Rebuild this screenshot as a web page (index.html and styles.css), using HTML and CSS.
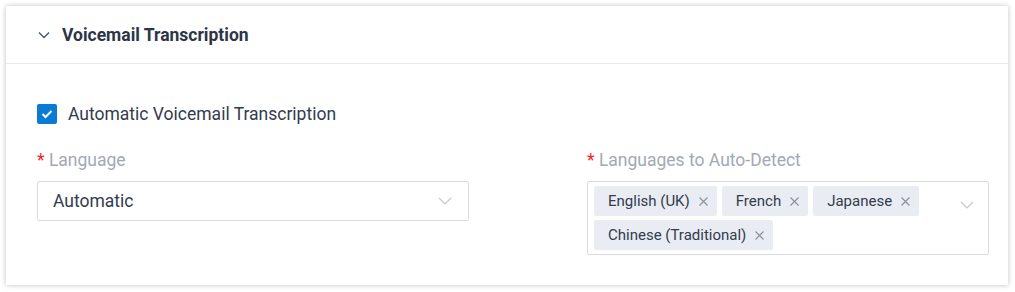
FILE: index.html
```html
<!DOCTYPE html>
<html lang="en">
  <head>
    <meta charset="UTF-8" />
    <meta name="viewport" content="width=device-width, initial-scale=1.0" />
    <title>Voicemail Transcription</title>
    <link rel="stylesheet" href="styles.css">
  </head>
  <body>
    <div class="card">
      <div class="card-header">
        <svg class="collapse-icon" width="12" height="8" viewBox="0 0 12 8">
          <path d="M1 1.5 L6 6.5 L11 1.5" fill="none" stroke="#4a5263" stroke-width="1.3" />
        </svg>
        <h2>Voicemail Transcription</h2>
      </div>
      <div class="card-body">
        <label class="check">
          <span class="checkbox">
            <svg width="12" height="10" viewBox="0 0 12 10">
              <path d="M1.5 5 L4.5 8 L10.5 2" fill="none" stroke="#fff" stroke-width="2" />
            </svg>
          </span>
          Automatic Voicemail Transcription
        </label>

        <div class="fields">
          <div class="field field-left">
            <div class="field-label"><span class="req">*</span> Language</div>
            <div class="select">
              <span class="select-value">Automatic</span>
              <svg class="arrow" width="14" height="8" viewBox="0 0 14 8">
                <path d="M1 1 L7 7 L13 1" fill="none" stroke="#c4c8d0" stroke-width="1.2" />
              </svg>
            </div>
          </div>

          <div class="field field-right">
            <div class="field-label"><span class="req">*</span> Languages to Auto-Detect</div>
            <div class="select multi">
              <div class="tags">
                <span class="tag">English (UK)<svg class="x" width="9" height="9" viewBox="0 0 9 9"><path d="M0.5 0.5 L8.5 8.5 M8.5 0.5 L0.5 8.5" stroke="#8a909c" stroke-width="1.1" /></svg></span>
                <span class="tag">French<svg class="x" width="9" height="9" viewBox="0 0 9 9"><path d="M0.5 0.5 L8.5 8.5 M8.5 0.5 L0.5 8.5" stroke="#8a909c" stroke-width="1.1" /></svg></span>
                <span class="tag">Japanese<svg class="x" width="9" height="9" viewBox="0 0 9 9"><path d="M0.5 0.5 L8.5 8.5 M8.5 0.5 L0.5 8.5" stroke="#8a909c" stroke-width="1.1" /></svg></span>
                <span class="tag">Chinese (Traditional)<svg class="x" width="9" height="9" viewBox="0 0 9 9"><path d="M0.5 0.5 L8.5 8.5 M8.5 0.5 L0.5 8.5" stroke="#8a909c" stroke-width="1.1" /></svg></span>
              </div>
              <svg class="arrow" width="14" height="8" viewBox="0 0 14 8">
                <path d="M1 1 L7 7 L13 1" fill="none" stroke="#c4c8d0" stroke-width="1.2" />
              </svg>
            </div>
          </div>
        </div>
      </div>
    </div>
  </body>
</html>
```

FILE: styles.css
```css
body {
  margin: 0;
  padding: 6px 7px 7px 6px;
  background-color: #fff;
  font-family: Roboto, "Noto Sans", sans-serif;
  color: #333b4d;
}

.card {
  background-color: #fff;
  box-shadow: 0 0 5px rgba(0, 0, 0, 0.25);
  height: 279px;
  box-sizing: border-box;
}

.card-header {
  display: flex;
  align-items: center;
  height: 58px;
  padding: 1px 0 0 32px;
  border-bottom: 1px solid #e8eaf0;
  box-sizing: border-box;
}

.collapse-icon {
  margin-right: 12px;
}

.card-header h2 {
  margin: 0;
  font-size: 17.5px;
  font-weight: 700;
  color: #2c3547;
}

.card-body {
  padding: 39px 19px 0 31px;
}

.check {
  display: flex;
  align-items: center;
  height: 21px;
  font-size: 17.5px;
  color: #333b4d;
  cursor: pointer;
}

.checkbox {
  display: flex;
  align-items: center;
  justify-content: center;
  width: 20px;
  height: 20px;
  border-radius: 2px;
  background-color: #0a7bd5;
  margin-right: 11px;
}

.fields {
  display: flex;
  justify-content: space-between;
  margin-top: 26px;
}

.field-left {
  width: 432px;
}

.field-right {
  width: 402px;
}

.field-label {
  font-size: 17.5px;
  color: #a3a8b6;
  margin-bottom: 11px;
  line-height: 20px;
}

.req {
  color: #f5222d;
}

.select {
  display: flex;
  align-items: center;
  justify-content: space-between;
  height: 40px;
  border: 1px solid #d9dce3;
  border-radius: 2px;
  box-sizing: border-box;
  padding: 0 16px 0 15px;
  font-size: 17.5px;
  color: #333b4d;
}

.select.multi {
  height: 74px;
  align-items: flex-start;
  padding: 4px 14px 4px 6px;
}

.select.multi .arrow {
  margin-top: 15px;
}

.tags {
  display: flex;
  flex-wrap: wrap;
  gap: 4px 5px;
  width: 340px;
}

.tag {
  display: inline-flex;
  align-items: center;
  height: 30px;
  padding: 0 9px 0 14px;
  background-color: #e9ecf3;
  border-radius: 2px;
  font-size: 15px;
  color: #333b4d;
}

.tag .x {
  margin-left: 9px;
}
```
